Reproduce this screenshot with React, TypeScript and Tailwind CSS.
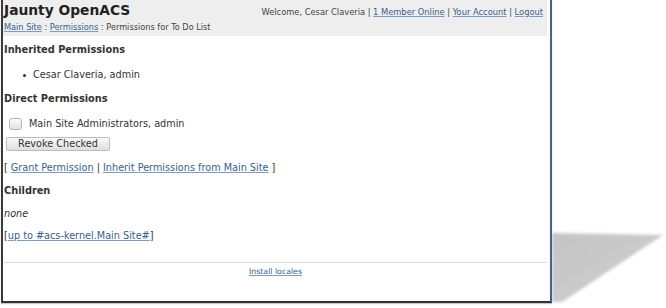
import React from "react";

const link = "text-[#35608f] underline decoration-[#7f9cbd] underline-offset-[1px]";

function Header() {
  return (
    <div className="flex justify-between bg-[#eeeeee] h-[36px] mr-[3px] pl-[1px] pr-[4px]">
      <div className="flex flex-col">
        <div className="pt-[2px] text-[13.8px] leading-[16px] font-bold text-[#222]">Jaunty OpenACS</div>
        <div className="mt-[4px] text-[8.2px] leading-[10px] text-[#444]">
          <a className={link}>Main Site</a> : <a className={link}>Permissions</a> : Permissions for To Do List
        </div>
      </div>
      <div className="mt-[7px] text-[8.3px] leading-[10px] text-[#444]">
        Welcome, Cesar Claveria | <a className={link}>1 Member Online</a> | <a className={link}>Your Account</a> |{" "}
        <a className={link}>Logout</a>
      </div>
    </div>
  );
}

function Heading({ children, className }: { children: React.ReactNode; className: string }) {
  return <div className={`text-[9.8px] leading-[12px] font-bold text-[#333] ${className}`}>{children}</div>;
}

export default function App() {
  return (
    <div className="relative w-[666px] h-[308px] bg-white overflow-hidden font-['DejaVu_Sans',sans-serif] text-[#333]">
      <div className="ml-px w-[551px] h-[303px] border-l-2 border-b-2 border-r-2 border-l-[#3a3a3a] border-b-[#333] border-r-[#3f6596] shadow-[0_1px_1px_#c8c8c8] flex flex-col">
        <Header />
        <div className="pl-[1px] pr-[3px] flex flex-col text-[9.7px] leading-[12px]">
          <Heading className="mt-[8px]">Inherited Permissions</Heading>
          <div className="mt-[13px] flex items-center">
            <span className="ml-[19px] w-[3px] h-[3px] rounded-full bg-[#333]" />
            <span className="ml-[7px]">Cesar Claveria, admin</span>
          </div>
          <Heading className="mt-[12px]">Direct Permissions</Heading>
          <div className="mt-[12px] h-[14px] flex items-center">
            <span className="ml-[5px] w-[13px] h-[12px] rounded-[3px] border border-[#b5b5b5] bg-gradient-to-b from-[#fbfbfb] to-[#e2e2e2]" />
            <span className="ml-[7px]">Main Site Administrators, admin</span>
          </div>
          <button className="mt-[6px] ml-[2px] w-[104px] h-[14px] rounded-[2px] border border-[#bdbdbd] bg-gradient-to-b from-[#fafafa] to-[#dedede] text-[9.7px] leading-[12px] text-[#333] flex items-center justify-center">
            Revoke Checked
          </button>
          <div className="mt-[11px]">
            [ <a className={link}>Grant Permission</a> | <a className={link}>Inherit Permissions from Main Site</a> ]
          </div>
          <Heading className="mt-[11px]">Children</Heading>
          <div className="mt-[11px] italic">none</div>
          <div className="mt-[10px]">
            [<a className={link}>up to #acs-kernel.Main Site#</a>]
          </div>
          <div className="mt-[20px] h-px bg-[#dcdcdc]" />
          <div className="mt-[4px] text-center text-[7.8px] leading-[10px]">
            <a className={link}>Install locales</a>
          </div>
        </div>
      </div>
      <svg className="absolute left-[552px] top-[228px]" width="114" height="80" viewBox="0 0 114 80">
        <defs>
          <filter id="blur" x="-20%" y="-20%" width="140%" height="140%">
            <feGaussianBlur stdDeviation="1.6" />
          </filter>
          <linearGradient id="g" x1="0" y1="0" x2="1" y2="1">
            <stop offset="0" stopColor="#c4c4c4" />
            <stop offset="0.7" stopColor="#cccccc" />
            <stop offset="1" stopColor="#e6e6e6" />
          </linearGradient>
        </defs>
        <polygon points="0,5 111,7 10,74 0,74" fill="url(#g)" filter="url(#blur)" />
      </svg>
    </div>
  );
}
